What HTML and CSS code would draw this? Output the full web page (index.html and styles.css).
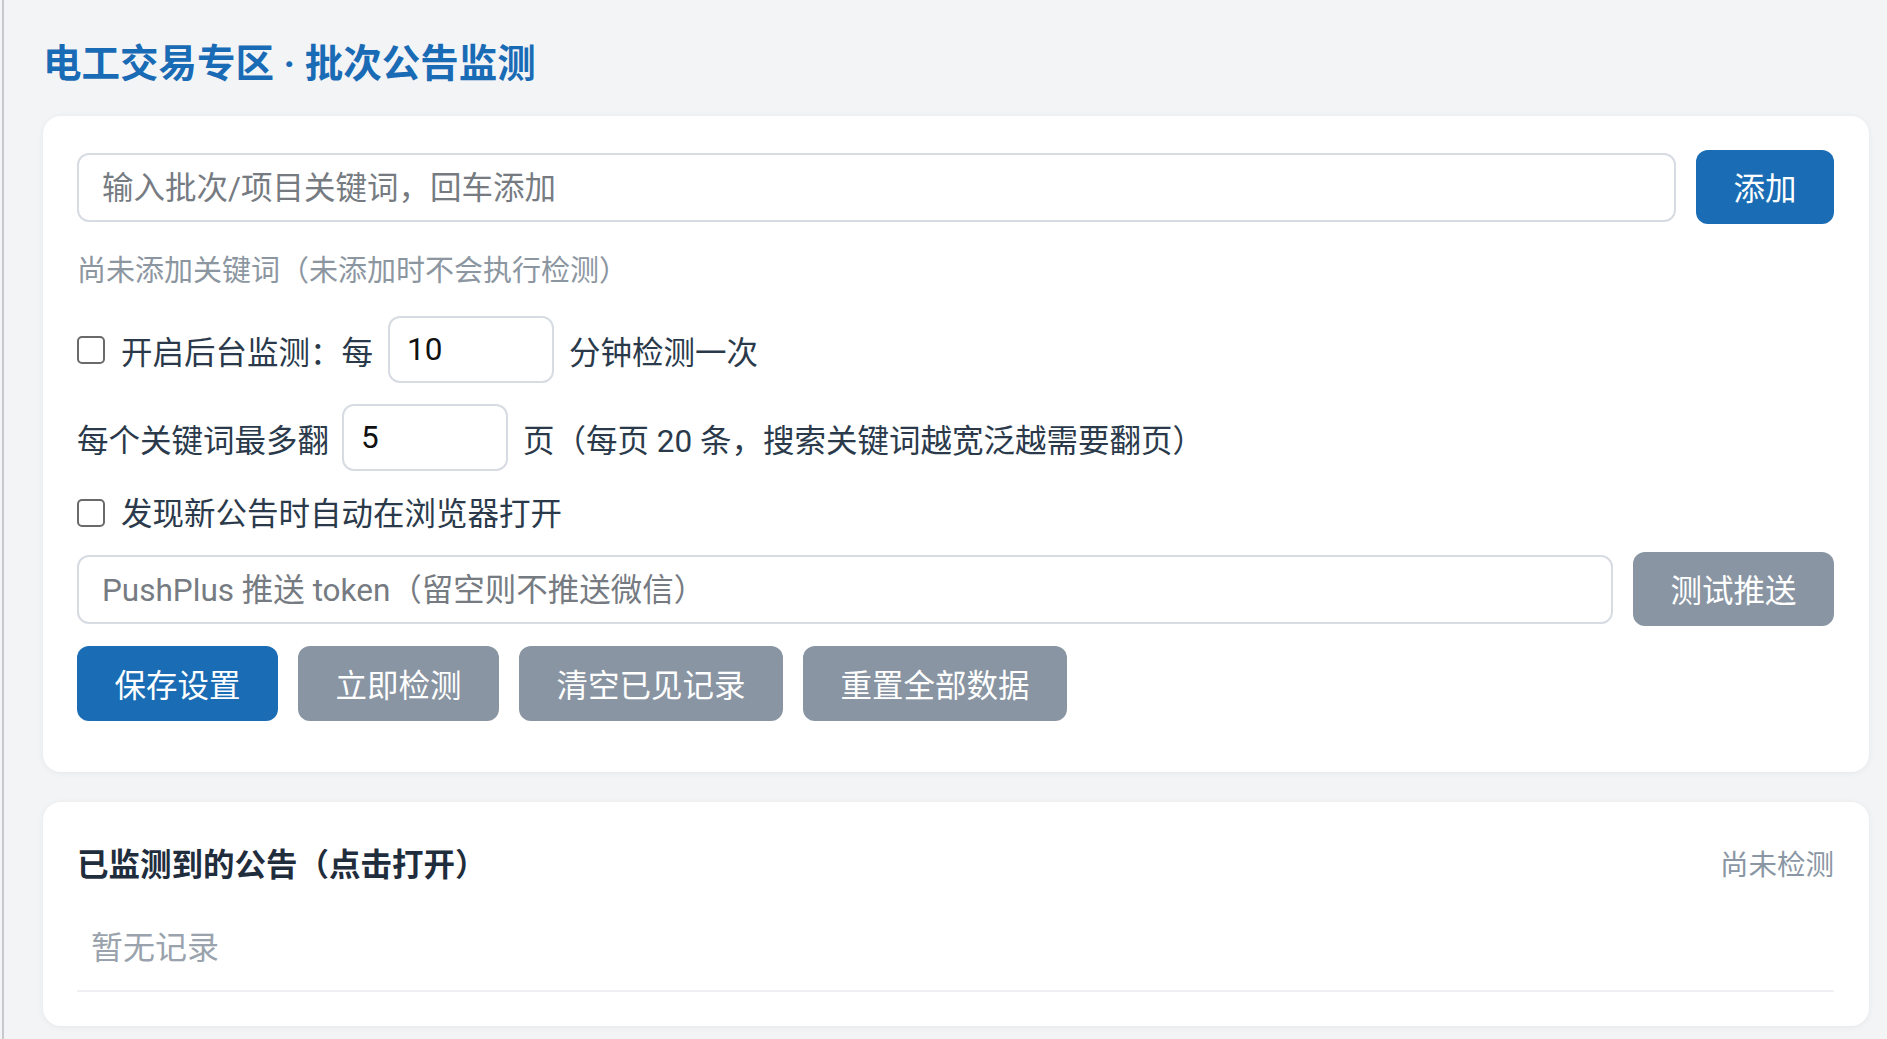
FILE: index.html
```html
<!DOCTYPE html>
<html lang="zh-CN">
  <head>
    <meta charset="UTF-8" />
    <meta name="viewport" content="width=device-width, initial-scale=1.0" />
    <title>电工交易专区 · 批次公告监测</title>
    <link rel="stylesheet" href="styles.css">
  </head>
  <body>
    <div class="window">
      <h1>电工交易专区 · 批次公告监测</h1>

      <!-- 设置区 -->
      <div class="card settings">
        <div class="field-row">
          <input type="text" class="text-input" placeholder="输入批次/项目关键词，回车添加" />
          <button class="btn btn-primary">添加</button>
        </div>

        <div class="hint">尚未添加关键词（未添加时不会执行检测）</div>

        <label class="opt-row row-interval"><input type="checkbox" class="check" />开启后台监测：每<input type="number" class="num-input" value="10" />分钟检测一次</label>

        <div class="opt-row row-pages">每个关键词最多翻<input type="number" class="num-input" value="5" />页（每页 20 条，搜索关键词越宽泛越需要翻页）</div>

        <label class="opt-row row-open"><input type="checkbox" class="check" />发现新公告时自动在浏览器打开</label>

        <div class="field-row row-push">
          <input type="text" class="text-input" placeholder="PushPlus 推送 token（留空则不推送微信）" />
          <button class="btn btn-muted">测试推送</button>
        </div>

        <div class="actions">
          <button class="btn btn-primary">保存设置</button>
          <button class="btn btn-muted">立即检测</button>
          <button class="btn btn-muted">清空已见记录</button>
          <button class="btn btn-muted">重置全部数据</button>
        </div>
      </div>

      <!-- 结果列表 -->
      <div class="card results">
        <div class="results-head">
          <h2>已监测到的公告（点击打开）</h2>
          <span class="status">尚未检测</span>
        </div>
        <ul class="notice-list">
          <li class="empty">暂无记录</li>
        </ul>
      </div>
    </div>
  </body>
</html>
```

FILE: styles.css
```css
* {
  box-sizing: border-box;
}

html,
body {
  margin: 0;
  background-color: #f3f4f6;
}

body {
  font-family: Roboto, "Noto Sans CJK SC", sans-serif;
  font-size: 31.5px;
  color: #2b3a4b;
}

.window {
  margin-left: 2px;
  border-left: 2px solid #c6cacf;
  min-height: 100vh;
  padding: 38px 18px 12px 39px;
}

h1 {
  margin: 0 0 26px;
  font-size: 38.5px;
  line-height: 52px;
  font-weight: 700;
  color: #1a6bb5;
}

.card {
  background-color: #fff;
  border-radius: 18px;
  box-shadow: 0 1px 6px rgba(0, 0, 0, 0.06);
  padding: 34px 35px 51px 34px;
}

.field-row {
  display: flex;
  align-items: center;
  gap: 20px;
}

.text-input {
  flex: 1;
  min-width: 0;
  height: 69px;
  padding: 2px 23px 0;
  border: 2px solid #d7dce3;
  border-radius: 12px;
  background: #fff;
  font: inherit;
  color: #222;
  outline: none;
}

.text-input::placeholder {
  color: #767b82;
}

.btn {
  flex: none;
  height: 74px;
  padding: 6px 37.5px 0;
  border: 0;
  border-radius: 12px;
  font: inherit;
  line-height: 1;
  color: #fff;
  white-space: nowrap;
  cursor: pointer;
}

.btn-primary {
  background-color: #1a6db5;
}

.btn-muted {
  background-color: #8995a2;
}

.hint {
  margin-top: 25px;
  font-size: 29px;
  line-height: 44px;
  color: #8c96a1;
}

.opt-row {
  display: flex;
  align-items: center;
}

.row-interval {
  margin-top: 23px;
}

.row-pages {
  margin-top: 21px;
}

.row-pages .num-input {
  margin-left: 13px;
}

.row-open {
  margin-top: 22px;
  line-height: 44px;
}

.row-open .check {
  margin-bottom: 5px;
}

.row-push {
  margin-top: 15px;
}

.check {
  appearance: none;
  -webkit-appearance: none;
  flex: none;
  width: 28px;
  height: 28px;
  margin: 0 16px 0 0;
  border: 2px solid #6a6a6a;
  border-radius: 5px;
  background: #fff;
}

.num-input {
  flex: none;
  width: 166px;
  height: 67px;
  margin: 0 15px;
  padding: 0 17px;
  border: 2px solid #d7dce3;
  border-radius: 12px;
  font: inherit;
  color: #111;
  outline: none;
  -moz-appearance: textfield;
}

.num-input::-webkit-inner-spin-button,
.num-input::-webkit-outer-spin-button {
  -webkit-appearance: none;
  margin: 0;
}

.actions {
  display: flex;
  gap: 20px;
  margin-top: 20px;
}

.actions .btn {
  height: 75px;
  padding-top: 7px;
}

.results {
  margin-top: 30px;
  padding: 34px 35px 34px 34px;
}

.results-head {
  display: flex;
  justify-content: space-between;
  align-items: center;
  height: 52px;
}

.results-head h2 {
  margin: 0;
  font-size: 31.5px;
  font-weight: 700;
  color: #1f2d3d;
}

.status {
  font-size: 28.5px;
  color: #8a96a3;
}

.notice-list {
  list-style: none;
  margin: 14px 0 0;
  padding: 0;
}

.notice-list li {
  padding: 22px 14px 18px;
  line-height: 48px;
  border-bottom: 2px solid #eef0f3;
}

.notice-list .empty {
  font-size: 32px;
  color: #9aa3ad;
}
```
